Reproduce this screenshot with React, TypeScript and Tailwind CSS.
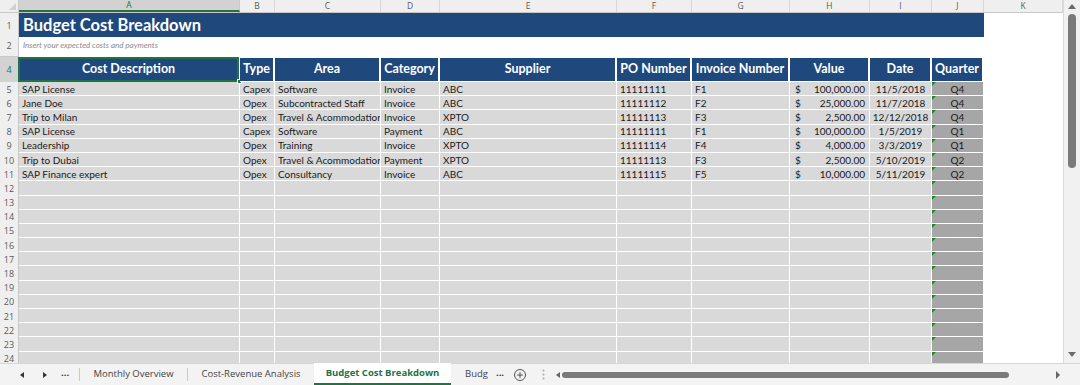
import React from 'react';

const widths = [
    'w-[221px]',
    'w-[35px]',
    'w-[106px]',
    'w-[59px]',
    'w-[177px]',
    'w-[75px]',
    'w-[98px]',
    'w-[80px]',
    'w-[62px]',
    'w-[52px]',
];

const letters = ['A', 'B', 'C', 'D', 'E', 'F', 'G', 'H', 'I', 'J'];

const headers = [
    'Cost Description',
    'Type',
    'Area',
    'Category',
    'Supplier',
    'PO Number',
    'Invoice Number',
    'Value',
    'Date',
    'Quarter',
];

const rows: string[][] = [
    ['SAP License', 'Capex', 'Software', 'Invoice', 'ABC', '11111111', 'F1', '100,000.00', '11/5/2018', 'Q4'],
    ['Jane Doe', 'Opex', 'Subcontracted Staff', 'Invoice', 'ABC', '11111112', 'F2', '25,000.00', '11/7/2018', 'Q4'],
    ['Trip to Milan', 'Opex', 'Travel & Acommodation', 'Invoice', 'XPTO', '11111113', 'F3', '2,500.00', '12/12/2018', 'Q4'],
    ['SAP License', 'Capex', 'Software', 'Payment', 'ABC', '11111111', 'F1', '100,000.00', '1/5/2019', 'Q1'],
    ['Leadership', 'Opex', 'Training', 'Invoice', 'XPTO', '11111114', 'F4', '4,000.00', '3/3/2019', 'Q1'],
    ['Trip to Dubai', 'Opex', 'Travel & Acommodation', 'Payment', 'XPTO', '11111113', 'F3', '2,500.00', '5/10/2019', 'Q2'],
    ['SAP Finance expert', 'Opex', 'Consultancy', 'Invoice', 'ABC', '11111115', 'F5', '10,000.00', '5/11/2019', 'Q2'],
];

const emptyRows = Array.from({ length: 13 }, (_, i) => i + 12);

function RowNum({ n, selected }: { n?: number; selected?: boolean }) {
    return (
        <div
            className={`w-[19px] shrink-0 h-full flex items-center justify-center border-r text-[9px] font-['Open_Sans',sans-serif] ${
                selected
                    ? 'bg-[#d2d2d2] text-[#217346] border-[#217346]'
                    : 'bg-[#efefef] text-[#5a5a5a] border-[#c8c8c8]'
            }`}
        >
            {n}
        </div>
    );
}

function GreenFlag() {
    return (
        <span className="absolute top-0 left-0 w-0 h-0 border-t-[4px] border-r-[4px] border-t-[#1c8a2c] border-r-transparent" />
    );
}

function DataRow({ n, cells }: { n: number; cells?: string[] }) {
    return (
        <div className="flex h-[14.2px] shrink-0">
            <RowNum n={n} />
            {widths.map((w, i) => {
                const v = cells ? cells[i] : '';
                if (i === 9) {
                    return (
                        <div
                            key={i}
                            className={`${w} shrink-0 relative bg-[#a6a6a6] border-r border-b border-white flex items-center justify-center`}
                        >
                            <GreenFlag />
                            {v}
                        </div>
                    );
                }
                if (i === 7) {
                    return (
                        <div
                            key={i}
                            className={`${w} shrink-0 bg-[#d9d9d9] border-r border-b border-white flex items-center justify-between pl-[5px] pr-[4px]`}
                        >
                            <span>{v ? '$' : ''}</span>
                            <span>{v}</span>
                        </div>
                    );
                }
                return (
                    <div
                        key={i}
                        className={`${w} shrink-0 bg-[#d9d9d9] border-r border-b border-white flex items-center overflow-hidden whitespace-nowrap px-[3px] ${
                            i === 8 ? 'justify-center' : ''
                        }`}
                    >
                        {v}
                    </div>
                );
            })}
            <div className="flex-1 bg-white" />
        </div>
    );
}

export default function App() {
    return (
        <div className="w-[1080px] h-[385px] flex flex-col bg-white overflow-hidden font-['Lato',sans-serif] text-[#1a1a1a]">
            <div className="flex h-[363px]">
                <div className="w-[1063px] flex flex-col overflow-hidden text-[10px] leading-none">
                    {/* column letters */}
                    <div className="flex h-[13px] shrink-0 bg-[#efefef] border-b border-[#c8c8c8] font-['Open_Sans',sans-serif] text-[8.5px] text-[#5a5a5a]">
                        <div className="w-[19px] shrink-0 border-r border-[#c8c8c8] relative">
                            <span className="absolute right-[2px] bottom-[2px] w-0 h-0 border-b-[7px] border-l-[7px] border-b-[#d0d0d0] border-l-transparent" />
                        </div>
                        {widths.map((w, i) => (
                            <div
                                key={i}
                                className={`${w} shrink-0 flex items-center justify-center border-r ${
                                    i === 0
                                        ? 'bg-[#d2d2d2] text-[#217346] border-[#c8c8c8] border-b-2 border-b-[#217346]'
                                        : 'border-[#d8d8d8]'
                                }`}
                            >
                                {letters[i]}
                            </div>
                        ))}
                        <div className="w-[79px] shrink-0 flex items-center justify-center border-r border-[#d8d8d8]">K</div>
                    </div>

                    {/* row 1 title */}
                    <div className="flex h-[24px] shrink-0">
                        <RowNum n={1} />
                        <div className="w-[965px] shrink-0 bg-[#1f497d] text-white font-bold text-[16.5px] flex items-center pl-[4px]">
                            Budget Cost Breakdown
                        </div>
                        <div className="flex-1" />
                    </div>

                    {/* row 2 subtitle */}
                    <div className="flex h-[16px] shrink-0">
                        <RowNum n={2} />
                        <div className="flex-1 flex items-center pl-[4px] italic text-[8px] text-[#8a8a8a]">
                            Insert your expected costs and payments
                        </div>
                    </div>

                    {/* row 3 hidden */}
                    <div className="flex h-[4px] shrink-0">
                        <div className="w-[19px] shrink-0 bg-[#efefef] border-r border-b border-[#c8c8c8]" />
                        <div className="flex-1" />
                    </div>

                    {/* row 4 headers */}
                    <div className="flex h-[25px] shrink-0">
                        <RowNum n={4} selected />
                        {headers.map((h, i) => (
                            <div
                                key={i}
                                className={`${widths[i]} shrink-0 relative bg-[#1f497d] border-r-2 border-t border-b border-white text-white font-bold text-[12.5px] flex items-center justify-center whitespace-nowrap`}
                            >
                                {h}
                                {i === 0 && (
                                    <>
                                        <span className="absolute inset-[-1px] border-2 border-[#217346]" />
                                        <span className="absolute right-[-4px] bottom-[-3px] w-[5px] h-[5px] bg-[#217346] border border-white" />
                                    </>
                                )}
                            </div>
                        ))}
                        <div className="flex-1" />
                    </div>

                    {rows.map((r, i) => (
                        <DataRow key={i} n={i + 5} cells={r} />
                    ))}
                    {emptyRows.map((n) => (
                        <DataRow key={n} n={n} />
                    ))}
                </div>

                {/* vertical scrollbar */}
                <div className="w-[17px] shrink-0 bg-[#f1f1f1] border-l border-[#dadada] flex flex-col items-center">
                    <span className="mt-[4px] w-0 h-0 border-l-[4px] border-r-[4px] border-b-[5px] border-l-transparent border-r-transparent border-b-[#6b6b6b]" />
                    <div className="mt-[5px] w-[8px] h-[154px] rounded-full bg-[#7a7a7a]" />
                    <div className="flex-1" />
                    <span className="mb-[6px] w-0 h-0 border-l-[4px] border-r-[4px] border-t-[5px] border-l-transparent border-r-transparent border-t-[#6b6b6b]" />
                </div>
            </div>

            {/* sheet tabs */}
            <div className="flex items-stretch h-[22px] bg-[#f3f3f3] border-t border-[#d6d6d6] font-['Open_Sans',sans-serif] text-[9.5px] text-[#444]">
                <div className="w-[80px] shrink-0 flex items-center border-r border-[#c9c9c9] my-[4px]">
                    <span className="ml-[20px] w-0 h-0 border-t-[3px] border-b-[3px] border-r-[4px] border-t-transparent border-b-transparent border-r-[#333]" />
                    <span className="ml-[19px] w-0 h-0 border-t-[3px] border-b-[3px] border-l-[4px] border-t-transparent border-b-transparent border-l-[#333]" />
                    <span className="ml-[14px] font-bold text-[#333] leading-none pb-[3px]">...</span>
                </div>
                <div className="w-[108px] shrink-0 flex items-center justify-center border-r border-[#c9c9c9] my-[4px]">
                    Monthly Overview
                </div>
                <div className="w-[126px] shrink-0 flex items-center justify-center">Cost-Revenue Analysis</div>
                <div className="w-[137px] shrink-0 flex items-center justify-center bg-white border-b-2 border-[#217346] text-[#217346] font-bold -mt-px">
                    Budget Cost Breakdown
                </div>
                <div className="w-[42px] shrink-0 flex items-center pl-[14px]">Budg</div>
                <div className="w-[14px] shrink-0 flex items-center justify-center font-bold text-[#333] leading-none pb-[3px]">...</div>
                <div className="w-[25px] shrink-0 flex items-center justify-center">
                    <svg width="12" height="12" viewBox="0 0 12 12" fill="none" stroke="#555" strokeWidth="1">
                        <circle cx="6" cy="6" r="5.5" />
                        <path d="M6 3v6M3 6h6" />
                    </svg>
                </div>
                <div className="w-[22px] shrink-0 flex items-center justify-center">
                    <svg width="3" height="11" viewBox="0 0 3 11" fill="#aaa">
                        <circle cx="1.5" cy="1.5" r="1" />
                        <circle cx="1.5" cy="5.5" r="1" />
                        <circle cx="1.5" cy="9.5" r="1" />
                    </svg>
                </div>
                <div className="flex-1 flex items-center">
                    <span className="ml-[2px] w-0 h-0 border-t-[3px] border-b-[3px] border-r-[4px] border-t-transparent border-b-transparent border-r-[#666]" />
                    <div className="ml-[2px] w-[447px] h-[6px] rounded-full bg-[#7a7a7a]" />
                    <div className="flex-1" />
                    <span className="mr-[20px] w-0 h-0 border-t-[4px] border-b-[4px] border-l-[4px] border-t-transparent border-b-transparent border-l-[#666]" />
                </div>
            </div>
        </div>
    );
}
